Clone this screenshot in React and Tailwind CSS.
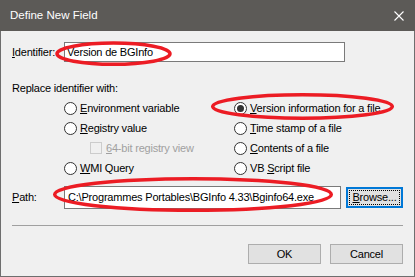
import React from 'react';

// Windows 10 style radio button
const Radio = ({ checked }) => (
    <span className="w-[13px] h-[13px] rounded-full border border-[#333333] bg-white flex items-center justify-center shrink-0">
        {checked && <span className="w-[7px] h-[7px] rounded-full bg-[#333333]" />}
    </span>
);

const Option = ({ checked, accel, rest }) => (
    <div className="h-[20px] flex items-center gap-[3px]">
        <Radio checked={checked} />
        <span><u>{accel}</u>{rest}</span>
    </div>
);

const Button = ({ children }) => (
    <button className="w-[73px] h-[20px] bg-[#e1e1e1] border border-[#adadad] flex items-center justify-center">
        {children}
    </button>
);

export default function App() {
    return (
        <div className="relative w-[415px] h-[277px] flex flex-col font-['Liberation_Sans',Arial,sans-serif] text-[11px] leading-[13px] tracking-[-0.2px] text-black">
            {/* title bar */}
            <div className="h-[31px] shrink-0 bg-[#5c5a57] flex items-center justify-between pl-[10px] pr-[11px] text-white text-[11.5px] tracking-normal">
                <span>Define New Field</span>
                <svg width="10" height="10" viewBox="0 0 10 10">
                    <path d="M0.5 0.5 L9.5 9.5 M9.5 0.5 L0.5 9.5" stroke="#fff" strokeWidth="1.1" />
                </svg>
            </div>

            {/* body */}
            <div className="flex-1 flex flex-col bg-[#f0f0f0] border-x border-b border-[#6e6e6e] pl-[11px]">
                <div className="mt-[11px] flex items-center">
                    <span className="w-[52px]"><u>I</u>dentifier:</span>
                    <div className="w-[281px] h-[20px] border border-[#7a7a7a] bg-white flex items-center pl-[2px]">Version de BGInfo</div>
                </div>

                <div className="mt-[20px]">Replace identifier with:</div>

                <div className="mt-[3px] pl-[52px] grid grid-cols-[170px_1fr]">
                    <Option accel="E" rest="nvironment variable" />
                    <Option checked accel="V" rest="ersion information for a file" />
                    <Option accel="R" rest="egistry value" />
                    <Option accel="T" rest="ime stamp of a file" />
                    <div className="h-[20px] flex items-center gap-[4px] pl-[26px] text-[#a0a0a0]">
                        <span className="w-[12px] h-[12px] border border-[#cccccc] bg-[#f0f0f0]" />
                        <span><u>6</u>4-bit registry view</span>
                    </div>
                    <Option accel="C" rest="ontents of a file" />
                    <Option accel="W" rest="MI Query" />
                    <div className="h-[20px] flex items-center gap-[3px]">
                        <Radio />
                        <span>VB <u>S</u>cript file</span>
                    </div>
                </div>

                <div className="mt-[8px] flex items-center">
                    <span className="w-[52px]"><u>P</u>ath:</span>
                    <div className="w-[277px] h-[23px] border border-[#7a7a7a] bg-white flex items-center pl-[3px]">C:\Programmes Portables\BGInfo 4.33\Bginfo64.exe</div>
                    <button className="ml-[5px] w-[57px] h-[21px] bg-[#e1e1e1] border-2 border-[#0078d7] p-px">
                        <span className="w-full h-full border border-dotted border-black flex items-center justify-center"><u>B</u>rowse...</span>
                    </button>
                </div>

                <div className="mt-[16px] mr-[11px] h-px bg-[#a0a0a0]" />

                <div className="mt-[18px] pr-[11px] flex justify-end gap-[9px]">
                    <Button>OK</Button>
                    <Button>Cancel</Button>
                </div>
            </div>

            {/* red annotation ellipses */}
            <svg className="absolute inset-0 pointer-events-none" width="415" height="277">
                <g fill="none" stroke="#ec1c24" strokeWidth="3.5">
                    <ellipse cx="113.5" cy="53.7" rx="56.5" ry="10.6" />
                    <ellipse cx="302.5" cy="106.5" rx="89.8" ry="11.8" />
                    <ellipse cx="193" cy="194.5" rx="138.3" ry="15.8" />
                </g>
            </svg>
        </div>
    );
}
